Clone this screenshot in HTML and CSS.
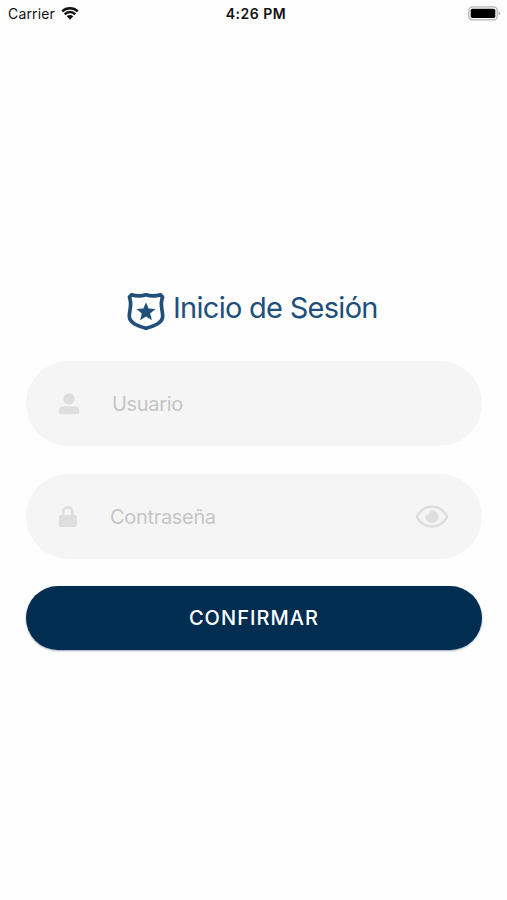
FILE: index.html
```html
<!DOCTYPE html>
<html lang="es">
<head>
<meta charset="utf-8">
<title>Inicio de Sesión</title>
<link rel="stylesheet" href="styles.css">
</head>
<body>
<header class="status">
  <div class="carrier">
    <span>Carrier</span>
    <svg class="wifi" width="18" height="13" viewBox="0 0 18 13">
      <path d="M1.2 4.400a11.300 11.300 0 0 1 15.600 0M3.700 7.300a7.400 7.400 0 0 1 10.600 0" fill="none" stroke="#111" stroke-width="2.500"/>
      <path d="M5.700 9.300a4.700 4.700 0 0 1 6.600 0L9 12.700z" fill="#111"/>
    </svg>
  </div>
  <time class="clock">4:26 PM</time>
  <svg class="battery" width="33" height="15" viewBox="0 0 33 15">
    <rect x=".8" y=".8" width="28.4" height="13" rx="3.6" fill="#fff" stroke="#b2b2b2" stroke-width="1.3"/>
    <rect x="2.7" y="2.7" width="24.6" height="9.2" rx="1.6" fill="#000"/>
    <path d="M30.6 5.1q1.6.7 1.6 2.2t-1.6 2.2z" fill="#b2b2b2"/>
  </svg>
</header>
<main class="login">
  <h1 class="title">
    <svg class="badge" width="40" height="40" viewBox="0 0 40 40">
      <path d="M5.500 3.800Q13 6 20 3.800Q27 6 34.500 3.800L36.600 6.200C33.500 13 36.700 19 36.700 25C36.700 32 29 34.500 20 37.300C11 34.500 3.300 32 3.300 25C3.300 19 6.500 13 3.400 6.200Z" fill="none" stroke="#214f7b" stroke-width="3.700" stroke-linejoin="round"/>
      <path d="M20 11.200l2.600 6.300 6.900.5-5.300 4.500 1.700 6.700-5.900-3.600-5.900 3.600 1.700-6.700-5.300-4.500 6.900-.5z" fill="#214f7b"/>
    </svg>
    <span class="title-text">Inicio de Sesión</span>
  </h1>
  <div class="field">
    <svg class="lead" width="22" height="22" viewBox="0 0 22 22" fill="#dedede">
      <circle cx="11" cy="6" r="5.700"/>
      <path d="M.7 19.500v-1.300Q.7 13.300 5.600 13.300h10.800q4.900 0 4.900 4.900v1.300q0 1.700-1.700 1.700H2.400Q.7 21.200.7 19.500z"/>
    </svg>
    <span class="placeholder user">Usuario</span>
  </div>
  <div class="field">
    <svg class="lead" width="20" height="22" viewBox="0 0 20 22">
      <path d="M5.200 10V6a4.600 4.600 0 0 1 9.200 0V10" fill="none" stroke="#dedede" stroke-width="2.800"/>
      <rect x=".8" y="8.900" width="18" height="12" rx="2" fill="#dedede"/>
    </svg>
    <span class="placeholder pass">Contraseña</span>
    <svg class="eye" width="34" height="24" viewBox="0 0 34 24">
      <path d="M1.800 11.600C8.500-1.500 25.500-1.500 32.200 11.600C25.500 24.700 8.500 24.700 1.800 11.600Z" fill="none" stroke="#dedede" stroke-width="2.500" stroke-linejoin="round"/>
      <path d="M14.500 5.700a6.500 6.500 0 1 1-3.600 3.800q2 .5 3.200-.7 1.100-1.300.4-3.100z" fill="#dedede"/>
    </svg>
  </div>
  <button class="confirm" type="button"><span>CONFIRMAR</span></button>
</main>
</body>
</html>
```
FILE: styles.css
```css
* {
  box-sizing: border-box;
}

body {
  margin: 0;
  height: 900px;
  background: #fefefe;
  font-family: Inter, "Liberation Sans", sans-serif;
  overflow: hidden;
}

svg {
  display: block;
  flex: none;
}

.status {
  display: grid;
  grid-template-columns: 1fr auto 1fr;
  align-items: center;
  height: 27px;
  padding: 0 6px 0 8px;
  color: #111;
  font-size: 14px;
}

.carrier {
  display: flex;
  align-items: center;
  gap: 6px;
  letter-spacing: 0.15px;
}

.clock {
  padding-left: 3px;
  font-weight: 600;
  letter-spacing: 0.5px;
}

.battery {
  justify-self: end;
}

.login {
  display: flex;
  flex-direction: column;
  padding: 264px 25px 0 26px;
}

.title {
  display: flex;
  align-items: center;
  gap: 7px;
  height: 40px;
  margin: 0 0 30px 100px;
  color: #214f7b;
  font-size: 29px;
  font-weight: 400;
  white-space: nowrap;
}

.title-text {
  margin-top: -8px;
  letter-spacing: -0.720px;
}

.field {
  display: flex;
  align-items: center;
  height: 85px;
  margin-bottom: 28px;
  padding: 0 33px 0 32px;
  border-radius: 43px;
  background: #f5f5f5;
}

.field + .field {
  margin-bottom: 27px;
}

.placeholder {
  color: #c5c5c7;
  font-size: 20px;
  letter-spacing: -0.320px;
}

.user {
  margin-left: 32px;
}

.pass {
  margin-left: 32px;
}

.eye {
  margin-left: auto;
}

.confirm {
  height: 64px;
  padding: 0;
  border: 0;
  border-radius: 32px;
  background: #002d50;
  box-shadow: 0 1px 2px rgba(0, 45, 80, 0.4);
  color: #fff;
  font: 500 20px Inter, "Liberation Sans", sans-serif;
  letter-spacing: 1.050px;
}
```
